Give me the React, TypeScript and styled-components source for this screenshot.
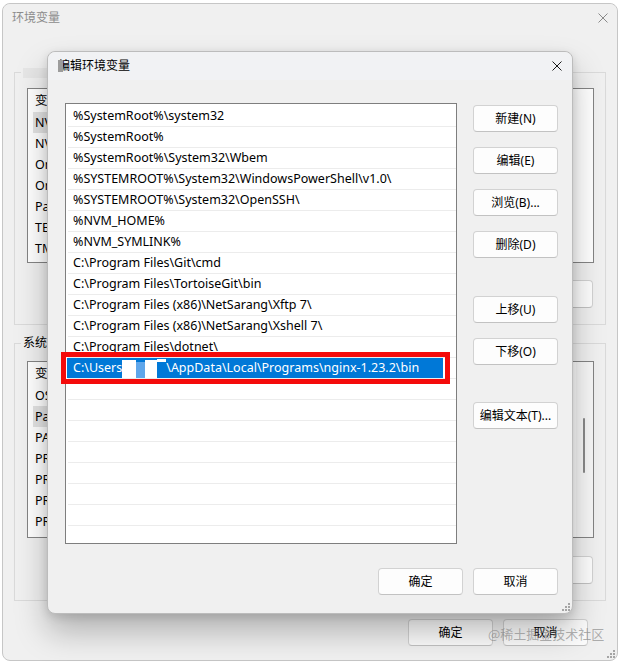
import React from "react";
import styled, { createGlobalStyle } from "styled-components";

const GlobalStyle = createGlobalStyle`
  html, body { margin: 0; padding: 0; background: #ffffff; }
  body {
    font-family: "Noto Sans", "Noto Sans CJK SC", sans-serif;
    font-size: 12px;
    color: #000;
  }
  * { box-sizing: border-box; }
`;

const Page = styled.div`
  position: relative;
  width: 623px;
  height: 662px;
  padding: 3px 5px 1px 2px;
  overflow: hidden;
`;

const Window = styled.div`
  position: relative;
  width: 616px;
  height: 658px;
  background: #f0f0f0;
  border: 1px solid #c6c6c6;
  border-radius: 8px;
  display: flex;
  flex-direction: column;
`;

const TitleBar = styled.div<{ $inactive?: boolean }>`
  height: 28px;
  flex: none;
  display: flex;
  align-items: center;
  justify-content: space-between;
  padding: 0 ${(p) => (p.$inactive ? 9 : 10)}px 0 ${(p) => (p.$inactive ? 9 : 10)}px;
  color: ${(p) => (p.$inactive ? "#8c8c8c" : "#000")};
  border-radius: 8px 8px 0 0;
  background: ${(p) => (p.$inactive ? "#f0f0f0" : "#f1f2f4")};
`;

const Title = styled.span<{ $marked?: boolean }>`
  position: relative;
  font-size: 12px;
  line-height: 18px;
  &::before {
    content: "";
    display: ${(p) => (p.$marked ? "block" : "none")};
    position: absolute;
    left: 0;
    top: 3px;
    width: 5px;
    height: 12px;
    background: #9c9c9c;
  }
`;

const CloseIcon = ({ color }: { color: string }) => (
  <svg width="10" height="10" viewBox="0 0 10 10">
    <path d="M0.5 0.5 L9.5 9.5 M9.5 0.5 L0.5 9.5" stroke={color} strokeWidth="1" fill="none" />
  </svg>
);

const Group = styled.fieldset<{ $mt: number; $pt: number }>`
  margin: ${(p) => p.$mt}px 11px 0 11px;
  padding: ${(p) => p.$pt}px 11px 16px 12px;
  border: 1px solid #dadada;
  min-width: 0;
`;

const Legend = styled.legend`
  padding: 0 2px;
  margin-left: -6px;
  font-size: 12px;
  line-height: 18px;
  color: #000;
`;

const Redacted = styled.span`
  display: inline-block;
  width: 30px;
  height: 10px;
  vertical-align: middle;
  background: #e6e6e6;
`;

const VarList = styled.div<{ $h: number }>`
  height: ${(p) => p.$h}px;
  background: #fff;
  border: 1px solid #848484;
  display: flex;
  overflow: hidden;
`;

const VarColumn = styled.div`
  flex: 1;
  min-width: 0;
`;

const VarHeader = styled.div`
  height: 23px;
  line-height: 23px;
  padding-left: 7px;
  font-size: 12.5px;
`;

const VarRow = styled.div<{ $selected?: boolean }>`
  height: 21px;
  line-height: 21px;
  padding-left: 2px;
  margin-left: 5px;
  width: 170px;
  white-space: nowrap;
  font-size: 12.5px;
  background: ${(p) => (p.$selected ? "#e3e3e3" : "transparent")};
`;

const ScrollTrack = styled.div`
  width: 17px;
  flex: none;
  background: #f7f7f7;
  padding-left: 7px;
`;

const ScrollThumb = styled.div`
  width: 2px;
  height: 55px;
  margin-top: 56px;
  background: #8a8a8a;
  border-radius: 1px;
`;

const ButtonRow = styled.div<{ $mt: number; $pr: number }>`
  display: flex;
  justify-content: flex-end;
  gap: 10px;
  margin-top: ${(p) => p.$mt}px;
  padding-right: ${(p) => p.$pr}px;
`;

const Btn = styled.button<{ $push?: number; $h?: number }>`
  width: 85px;
  height: ${(p) => p.$h ?? 27}px;
  margin-top: ${(p) => p.$push ?? 0}px;
  padding: 0;
  flex: none;
  background: #fdfdfd;
  border: 1px solid #d2d2d2;
  border-bottom-color: #c2c2c2;
  border-radius: 4px;
  font-family: "Noto Sans", "Noto Sans CJK SC", sans-serif;
  font-size: 12px;
  line-height: 18px;
  color: #000;
`;

const Dialog = styled.div`
  position: absolute;
  left: 44px;
  top: 47px;
  width: 526px;
  height: 563px;
  background: #f0f0f0;
  border: 1px solid #bcbcbc;
  border-radius: 8px;
  box-shadow: 0 18px 32px rgba(0, 0, 0, 0.26), 0 3px 10px rgba(0, 0, 0, 0.12);
  display: flex;
  flex-direction: column;
`;

const DialogBody = styled.div`
  display: flex;
  padding: 23px 0 0 17px;
`;

const ListFrame = styled.div`
  position: relative;
  flex: none;
`;

const PathList = styled.div`
  width: 392px;
  height: 441px;
  background: #fff;
  border: 1px solid #7e7e7e;
  padding-top: 2px;
  overflow: hidden;
`;

const PathRow = styled.div`
  height: 21px;
  margin-left: 2px;
  border-bottom: 1px solid #ececec;
  display: flex;
  align-items: stretch;
`;

const PathText = styled.div<{ $selected?: boolean }>`
  width: 376px;
  margin-left: ${(p) => (p.$selected ? -1 : 0)}px;
  padding-left: ${(p) => (p.$selected ? 6 : 5)}px;
  line-height: 20px;
  white-space: nowrap;
  font-size: 12.5px;
  color: ${(p) => (p.$selected ? "#fff" : "#000")};
  background: ${(p) => (p.$selected ? "#0078d7" : "transparent")};
`;

const Mask = styled.span<{ $w: number; $tone: "white" | "light" | "strip" }>`
  display: inline-block;
  width: ${(p) => p.$w}px;
  height: ${(p) => (p.$tone === "strip" ? 3 : p.$tone === "light" ? 16 : 18)}px;
  vertical-align: ${(p) => (p.$tone === "strip" ? "top" : "bottom")};
  margin-top: ${(p) => (p.$tone === "strip" ? 1 : 0)}px;
  background: ${(p) => (p.$tone === "light" ? "#5fa6ea" : "#ffffff")};
`;

const Annotation = styled.div`
  position: absolute;
  left: -4px;
  top: 249px;
  width: 389px;
  height: 32px;
  border: 5px solid #f40b0b;
  pointer-events: none;
`;

const SideButtons = styled.div`
  display: flex;
  flex-direction: column;
  gap: 15px;
  margin-left: 16px;
  padding-top: 2px;
`;

const Footer = styled.div`
  display: flex;
  justify-content: flex-end;
  gap: 10px;
  margin-top: 24px;
  padding-right: 14px;
`;

const Grip = styled.svg`
  position: absolute;
  right: 2px;
  bottom: 2px;
`;

const GripIcon = () => (
  <Grip width="8" height="8" viewBox="0 0 8 8">
    <g fill="#a5a5a5">
      <rect x="6" y="0" width="2" height="2" />
      <rect x="3" y="3" width="2" height="2" />
      <rect x="6" y="3" width="2" height="2" />
      <rect x="0" y="6" width="2" height="2" />
      <rect x="3" y="6" width="2" height="2" />
      <rect x="6" y="6" width="2" height="2" />
    </g>
  </Grip>
);

const Watermark = styled.div`
  position: absolute;
  left: 488px;
  top: 625px;
  font-family: "Noto Sans CJK SC", "Noto Sans", sans-serif;
  font-size: 13px;
  line-height: 18px;
  color: rgba(125, 125, 125, 0.6);
  white-space: nowrap;
  pointer-events: none;
`;

const userVars = ["NVM_HOME", "NVM_SYMLINK", "OneDrive", "OneDriveConsumer", "Path", "TEMP", "TMP"];
const sysVars = ["OS", "Path", "PATHEXT", "PROCESSOR_ARCHITECTURE", "PROCESSOR_IDENTIFIER", "PROCESSOR_LEVEL", "PROCESSOR_REVISION"];

const paths = [
  "%SystemRoot%\\system32",
  "%SystemRoot%",
  "%SystemRoot%\\System32\\Wbem",
  "%SYSTEMROOT%\\System32\\WindowsPowerShell\\v1.0\\",
  "%SYSTEMROOT%\\System32\\OpenSSH\\",
  "%NVM_HOME%",
  "%NVM_SYMLINK%",
  "C:\\Program Files\\Git\\cmd",
  "C:\\Program Files\\TortoiseGit\\bin",
  "C:\\Program Files (x86)\\NetSarang\\Xftp 7\\",
  "C:\\Program Files (x86)\\NetSarang\\Xshell 7\\",
  "C:\\Program Files\\dotnet\\",
];

export default function App() {
  const empties = Array.from({ length: 8 }, (_, i) => i);
  return (
    <>
      <GlobalStyle />
      <Page>
        <Window>
          <TitleBar $inactive>
            <Title>环境变量</Title>
            <CloseIcon color="#8a8a8a" />
          </TitleBar>

          <Group $mt={31} $pt={7}>
            <Legend>
              <Redacted />
            </Legend>
            <VarList $h={175}>
              <VarColumn>
                <VarHeader>变量</VarHeader>
                {userVars.map((v, i) => (
                  <VarRow key={v + i} $selected={i === 0}>
                    {v}
                  </VarRow>
                ))}
              </VarColumn>
            </VarList>
            <ButtonRow $mt={17} $pr={1}>
              <Btn $h={28}>新建(N)...</Btn>
              <Btn $h={28}>编辑(E)...</Btn>
              <Btn $h={28}>删除(D)</Btn>
            </ButtonRow>
          </Group>

          <Group $mt={9} $pt={9}>
            <Legend>系统变量(S)</Legend>
            <VarList $h={177}>
              <VarColumn>
                <VarHeader>变量</VarHeader>
                {sysVars.map((v, i) => (
                  <VarRow key={v + i} $selected={i === 1}>
                    {v}
                  </VarRow>
                ))}
              </VarColumn>
              <ScrollTrack>
                <ScrollThumb />
              </ScrollTrack>
            </VarList>
            <ButtonRow $mt={18} $pr={1}>
              <Btn $h={28}>新建(W)...</Btn>
              <Btn $h={28}>编辑(I)...</Btn>
              <Btn $h={28}>删除(L)</Btn>
            </ButtonRow>
          </Group>

          <ButtonRow $mt={18} $pr={29}>
            <Btn>确定</Btn>
            <Btn>取消</Btn>
          </ButtonRow>

          <GripIcon />

          <Dialog>
            <TitleBar>
              <Title $marked>编辑环境变量</Title>
              <CloseIcon color="#1a1a1a" />
            </TitleBar>
            <DialogBody>
              <ListFrame>
                <PathList>
                  {paths.map((p) => (
                    <PathRow key={p}>
                      <PathText>{p}</PathText>
                    </PathRow>
                  ))}
                  <PathRow>
                    <PathText $selected>
                      C:\Users
                      <Mask $w={14} $tone="white" />
                      <Mask $w={9} $tone="light" />
                      <Mask $w={12} $tone="white" />
                      <Mask $w={9} $tone="strip" />
                      \AppData\Local\Programs\nginx-1.23.2\bin
                    </PathText>
                  </PathRow>
                  {empties.map((i) => (
                    <PathRow key={"e" + i}>
                      <PathText />
                    </PathRow>
                  ))}
                </PathList>
                <Annotation />
              </ListFrame>
              <SideButtons>
                <Btn>新建(N)</Btn>
                <Btn>编辑(E)</Btn>
                <Btn>浏览(B)...</Btn>
                <Btn>删除(D)</Btn>
                <Btn $push={23}>上移(U)</Btn>
                <Btn>下移(O)</Btn>
                <Btn $push={22}>编辑文本(T)...</Btn>
              </SideButtons>
            </DialogBody>
            <Footer>
              <Btn>确定</Btn>
              <Btn>取消</Btn>
            </Footer>
            <GripIcon />
          </Dialog>
        </Window>
        <Watermark>@稀土掘金技术社区</Watermark>
      </Page>
    </>
  );
}
